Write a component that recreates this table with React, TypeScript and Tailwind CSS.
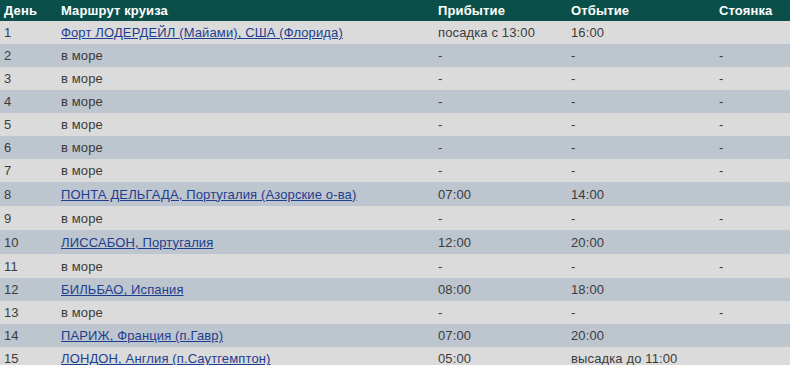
const rows = [
  { day: "1", port: "Форт ЛОДЕРДЕЙЛ (Майами), США (Флорида)", link: true, arrive: "посадка с 13:00", depart: "16:00", stay: "" },
  { day: "2", port: "в море", link: false, arrive: "-", depart: "-", stay: "-" },
  { day: "3", port: "в море", link: false, arrive: "-", depart: "-", stay: "-" },
  { day: "4", port: "в море", link: false, arrive: "-", depart: "-", stay: "-" },
  { day: "5", port: "в море", link: false, arrive: "-", depart: "-", stay: "-" },
  { day: "6", port: "в море", link: false, arrive: "-", depart: "-", stay: "-" },
  { day: "7", port: "в море", link: false, arrive: "-", depart: "-", stay: "-" },
  { day: "8", port: "ПОНТА ДЕЛЬГАДА, Португалия (Азорские о-ва)", link: true, arrive: "07:00", depart: "14:00", stay: "" },
  { day: "9", port: "в море", link: false, arrive: "-", depart: "-", stay: "-" },
  { day: "10", port: "ЛИССАБОН, Португалия", link: true, arrive: "12:00", depart: "20:00", stay: "" },
  { day: "11", port: "в море", link: false, arrive: "-", depart: "-", stay: "-" },
  { day: "12", port: "БИЛЬБАО, Испания", link: true, arrive: "08:00", depart: "18:00", stay: "" },
  { day: "13", port: "в море", link: false, arrive: "-", depart: "-", stay: "-" },
  { day: "14", port: "ПАРИЖ, Франция (п.Гавр)", link: true, arrive: "07:00", depart: "20:00", stay: "" },
  { day: "15", port: "ЛОНДОН, Англия (п.Саутгемптон)", link: true, arrive: "05:00", depart: "высадка до 11:00", stay: "" },
];

export default function App() {
  return (
    <div className="w-[790px] bg-white font-['Liberation_Sans',Arial,sans-serif] text-[13px] tracking-[0.13px]">
      <table className="w-full table-fixed border-collapse">
        <colgroup>
          <col className="w-[57px]" />
          <col className="w-[377px]" />
          <col className="w-[133px]" />
          <col className="w-[148px]" />
          <col className="w-[75px]" />
        </colgroup>
        <thead>
          <tr className="h-[21px] bg-[#0b4f4a] text-left font-bold text-white">
            <th className="px-1 py-0 pt-px">День</th>
            <th className="px-1 py-0 pt-px">Маршрут круиза</th>
            <th className="px-1 py-0 pt-px">Прибытие</th>
            <th className="px-1 py-0 pt-px">Отбытие</th>
            <th className="px-1 py-0 pt-px">Стоянка</th>
          </tr>
        </thead>
        <tbody className="text-[#3b3b3b]">
          {rows.map((r, i) => {
            const tall = i >= 7 && i <= 10;
            return (
              <tr
                key={r.day}
                className={`${i % 2 === 0 ? "bg-[#dbdbdb]" : "bg-[#bdc5ce]"} ${tall ? "h-[24px]" : "h-[23px]"}`}
              >
                <td className="px-1 py-0 pt-px">{r.day}</td>
                <td className="px-1 py-0 pt-px">
                  {r.link ? (
                    <a href="#" className="text-[#1f3d8f] underline">
                      {r.port}
                    </a>
                  ) : (
                    r.port
                  )}
                </td>
                <td className="px-1 py-0 pt-px">{r.arrive}</td>
                <td className="px-1 py-0 pt-px">{r.depart}</td>
                <td className="px-1 py-0 pt-px">{r.stay}</td>
              </tr>
            );
          })}
        </tbody>
      </table>
    </div>
  );
}
